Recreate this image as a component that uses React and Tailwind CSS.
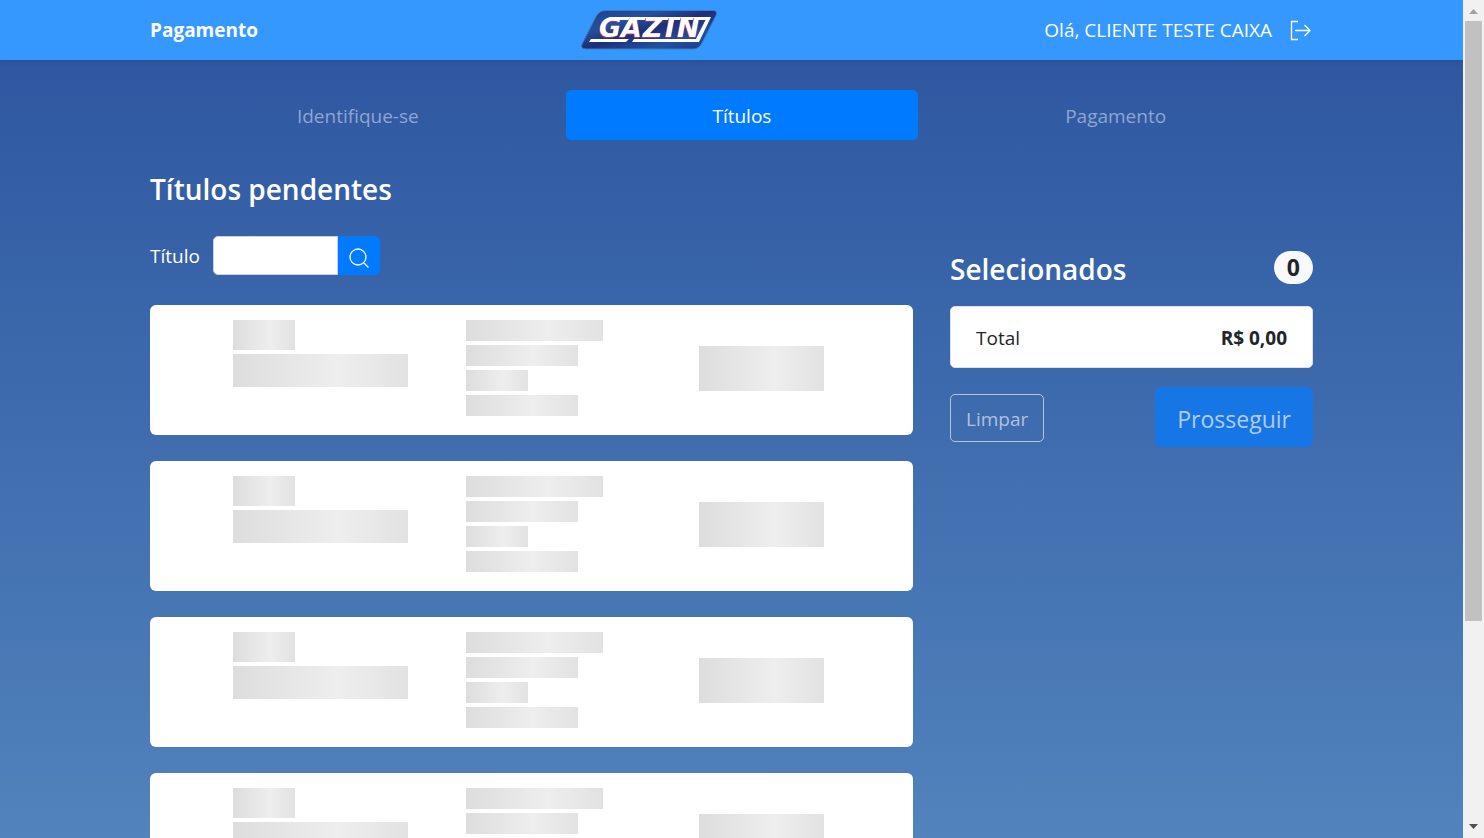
import React from "react";

const steps = [
  { label: "Identifique-se", active: false },
  { label: "Títulos", active: true },
  { label: "Pagamento", active: false },
];

function Logo() {
  return (
    <svg width="138" height="42" viewBox="0 0 138 42" role="img" aria-label="Gazin">
      <defs>
        <linearGradient id="plate" x1="0" y1="0" x2="1" y2="1">
          <stop offset="0" stopColor="#1f3f8e" />
          <stop offset="0.3" stopColor="#24509f" />
          <stop offset="0.5" stopColor="#1d2f78" />
          <stop offset="0.75" stopColor="#2350a2" />
          <stop offset="1" stopColor="#1c3680" />
        </linearGradient>
      </defs>
      <path
        d="M26 1.500H133Q138 1.500 136 6.500L122 34Q119 40 113 40H6Q0 40 2 35L16 7.500Q19 1.500 26 1.500Z"
        fill="url(#plate)"
        stroke="#4878ae"
        strokeWidth="1"
      />
      <path d="M30 8H129L127 11H27Z" fill="#fff" />
      <path d="M127 8H131L119 33H108L110 30H116Z" fill="#fff" />
      <path d="M11 30H49L46 33H9Z" fill="#fff" />
      <path d="M54 30H112L110 33H52Z" fill="#fff" />
      <g fontFamily="DejaVu Sans, sans-serif" fontSize="27" fontWeight="700" fontStyle="italic">
        <text x="18 40 62 84 96" y="29" fill="#a8385c">
          GAZIN
        </text>
        <text x="19 41 63 85 97" y="28" fill="#fff">
          GAZIN
        </text>
      </g>
    </svg>
  );
}

function Bone({ className }) {
  return (
    <div
      className={`max-w-full bg-linear-to-r from-[#dddddd] via-[#eeeeee] via-60% to-[#e2e2e2] ${className}`}
    />
  );
}

function SkeletonCard() {
  return (
    <li className="grid shrink-0 grid-cols-[233fr_233fr_214fr] rounded-md bg-white pt-[15px] pb-[19px] pl-[83px]">
      <div className="flex flex-col gap-1">
        <Bone className="h-[30px] w-[62px]" />
        <Bone className="h-[33px] w-[175px]" />
      </div>
      <div className="flex flex-col gap-1">
        <Bone className="h-[21px] w-[137px]" />
        <Bone className="h-[21px] w-[112px]" />
        <Bone className="h-[21px] w-[62px]" />
        <Bone className="h-[21px] w-[112px]" />
      </div>
      <div className="flex items-center">
        <Bone className="h-[45px] w-[125px]" />
      </div>
    </li>
  );
}

function ScrollRail() {
  return (
    <div aria-hidden="true" className="flex w-[21px] shrink-0 flex-col items-center bg-[#f1f1f1]">
      <svg width="17" height="21" viewBox="0 0 17 21">
        <path d="M4 14L8.500 9L13 14Z" fill="#a3a3a3" />
      </svg>
      <div className="flex w-full flex-1 flex-col px-[2px]">
        <div className="basis-3/4 bg-[#c1c1c1]" />
      </div>
      <svg width="17" height="17" viewBox="0 0 17 17">
        <path d="M4 3L8.500 8L13 3Z" fill="#505050" />
      </svg>
    </div>
  );
}

export default function App() {
  return (
    <div className="flex h-screen overflow-hidden font-['Open_Sans','Noto_Sans',sans-serif] text-[19px] leading-[30px] text-white">
      <div className="flex min-w-0 flex-1 flex-col overflow-hidden bg-linear-to-b from-[#2c549f] to-[#5283bc]">
        <header className="relative shrink-0 bg-[#3598ff] shadow-[0_2px_5px_rgba(0,0,0,0.08)]">
          <div className="mx-auto grid h-[60px] w-full max-w-[1163px] grid-cols-[1fr_auto_1fr] items-center">
            <a href="#inicio" className="text-[19px] font-bold">
              Pagamento
            </a>
            <a href="#gazin" className="mr-[166px]">
              <Logo />
            </a>
            <div className="flex items-center justify-end gap-[18px] whitespace-nowrap">
              <span>Olá, CLIENTE TESTE CAIXA</span>
              <button type="button" aria-label="Sair">
                <svg width="23" height="22" viewBox="0 0 23 22" fill="none" stroke="#fff" strokeWidth="1.300">
                  <path d="M8 2.500H1.500V20.500H8M5 11.500H20M14.500 6L20 11.500L14.500 17" />
                </svg>
              </button>
            </div>
          </div>
        </header>

        <main className="mx-auto flex min-h-0 w-full max-w-[1163px] flex-1 flex-col pt-[30px]">
          <nav className="flex shrink-0">
            {steps.map((s) => (
              <a
                key={s.label}
                href={`#${s.label}`}
                className={`flex-auto rounded-[5px] pt-[11px] pb-[9px] text-center ${
                  s.active ? "bg-[#007bff] text-white" : "text-[#8fa6d1]"
                }`}
              >
                {s.label}
              </a>
            ))}
          </nav>

          <h1 className="mt-[31px] text-[28px] leading-[36px] font-semibold">Títulos pendentes</h1>

          <div className="grid grid-cols-[763fr_363fr] gap-x-[37px] pt-[29px]">
            <div>
              <form className="flex items-center">
                <label htmlFor="titulo" className="w-[63px]">
                  Título
                </label>
                <input
                  id="titulo"
                  type="text"
                  className="h-[39px] w-[125px] rounded-l-[5px] border border-[#ced4da] bg-white px-3 text-[#495057]"
                />
                <button
                  type="button"
                  aria-label="Buscar"
                  className="flex h-[39px] w-[42px] items-center justify-center rounded-r-[5px] bg-[#007bff] pt-1"
                >
                  <svg width="22" height="22" viewBox="0 0 22 22" fill="none" stroke="#fff" strokeWidth="1.300">
                    <circle cx="10" cy="10" r="8" />
                    <path d="M15.600 15.600L20.500 20.500" />
                  </svg>
                </button>
              </form>
              <ul className="mt-[30px] flex flex-col gap-[26px]">
                <SkeletonCard />
                <SkeletonCard />
                <SkeletonCard />
                <SkeletonCard />
              </ul>
            </div>

            <aside className="pt-[15px]">
              <div className="flex items-start justify-between">
                <h2 className="text-[28px] leading-[36px] font-semibold">Selecionados</h2>
                <span className="rounded-full bg-[#f8f9fa] px-[13px] text-[23px] leading-[33px] font-bold text-[#212529]">
                  0
                </span>
              </div>
              <div className="mt-[19px] flex justify-between rounded-[5px] border border-[#dfdfdf] bg-white px-[25px] pt-4 pb-[14px] text-[#212529]">
                <span>Total</span>
                <strong className="font-bold">R$ 0,00</strong>
              </div>
              <div className="mt-[19px] flex items-center justify-between">
                <button
                  type="button"
                  disabled
                  className="mt-px rounded-[5px] border border-[#b4c4e0] px-[15px] pt-[9px] pb-[7px] text-[#b0c1df]"
                >
                  Limpar
                </button>
                <button
                  type="button"
                  disabled
                  className="rounded-md bg-[#1676e6] px-[22px] pt-[14px] pb-[10px] text-[23px] leading-[36px] text-[#b3cbee]"
                >
                  Prosseguir
                </button>
              </div>
            </aside>
          </div>
        </main>
      </div>
      <ScrollRail />
    </div>
  );
}
